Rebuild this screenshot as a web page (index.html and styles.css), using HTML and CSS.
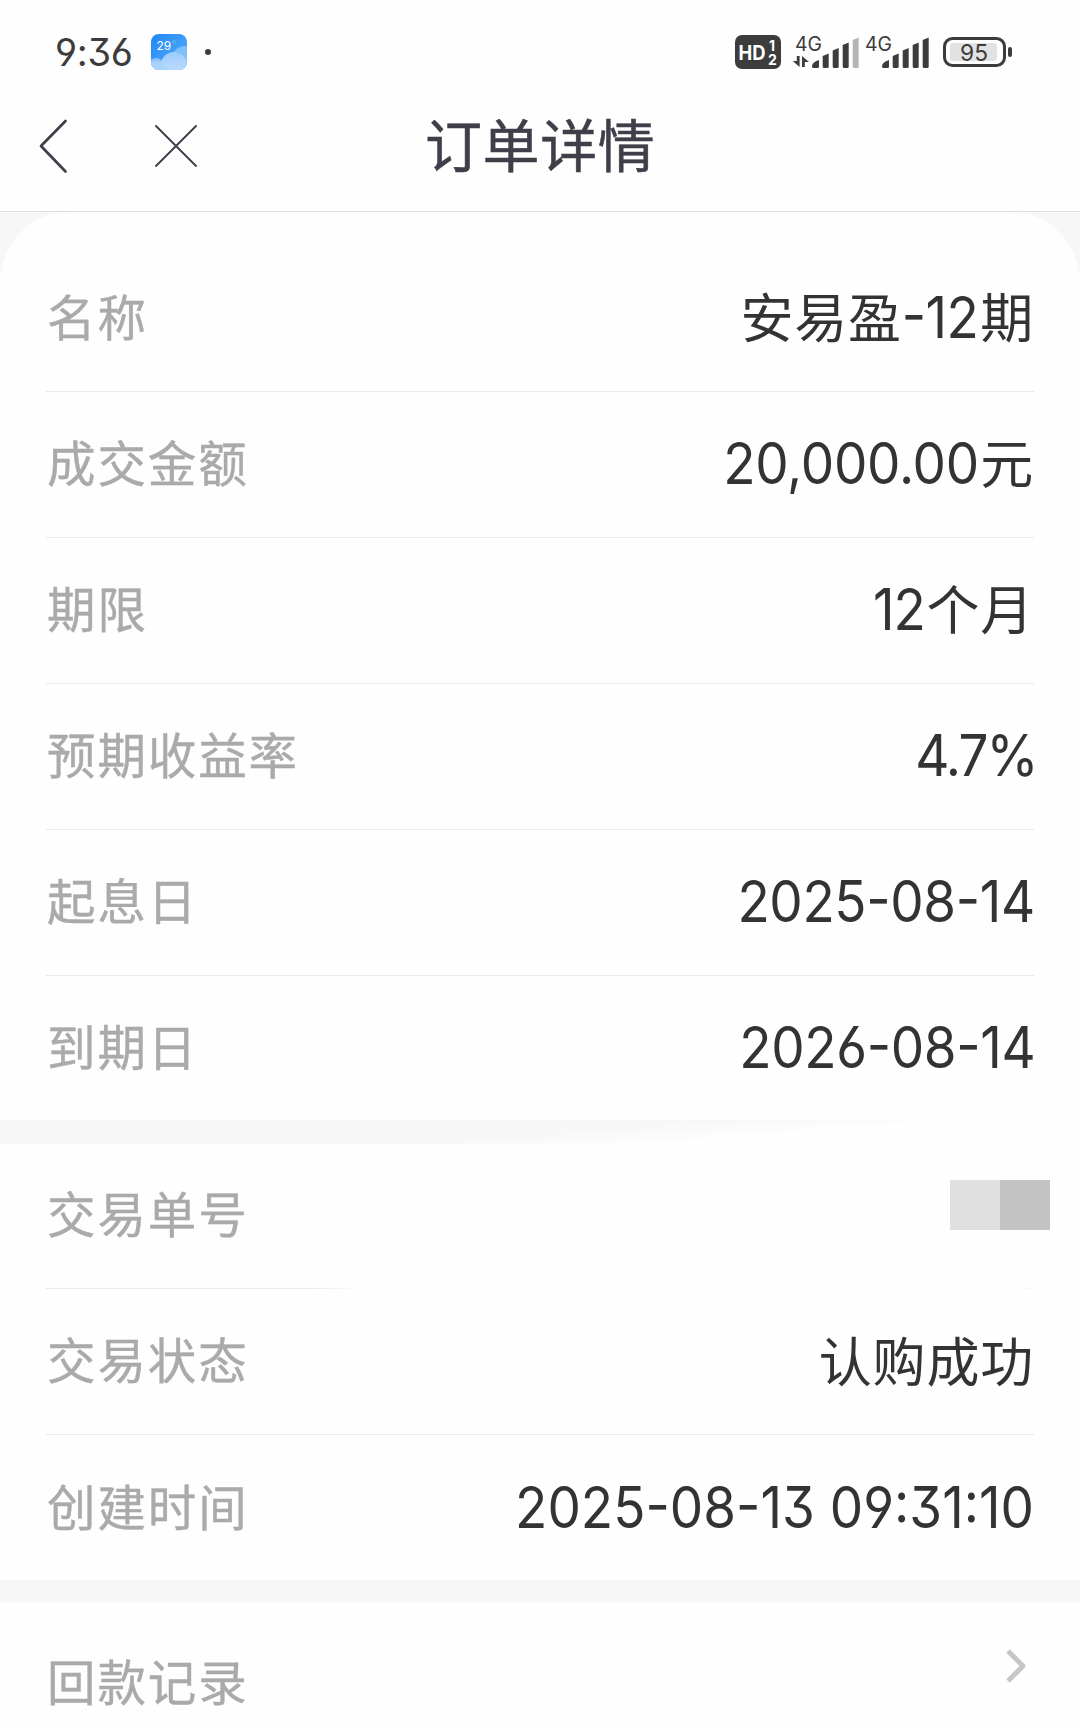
FILE: index.html
```
<!DOCTYPE html>
<html lang="zh-CN">
<head>
<meta charset="utf-8">
<title>订单详情</title>
<link rel="stylesheet" href="styles.css">
</head>
<body>
<div class="status">
  <span class="clock">9:36</span>
  <svg class="weather" width="36" height="36" viewBox="0 0 36 36">
    <defs>
      <linearGradient id="sky" x1="0" y1="0" x2="1" y2="1"><stop offset="0" stop-color="#1f86f5"/><stop offset="1" stop-color="#5cb2fb"/></linearGradient>
      <linearGradient id="cloud" x1="0" y1="0" x2="0" y2="1"><stop offset="0" stop-color="#9dcbfc"/><stop offset="1" stop-color="#c6e0fd"/></linearGradient>
      <clipPath id="tile"><rect width="36" height="36" rx="8"/></clipPath>
    </defs>
    <g clip-path="url(#tile)">
      <rect width="36" height="36" fill="url(#sky)"/>
      <circle cx="34" cy="25" r="13" fill="#7fbffb"/>
      <circle cx="5" cy="32" r="8" fill="#8cc5fc"/>
      <circle cx="23" cy="31" r="13" fill="url(#cloud)"/>
      <path d="M0 29q6-5 11 1q4 5 12 6H0z" fill="#a9d2fd"/>
    </g>
    <text x="5.500" y="16" class="temp">29</text>
    <circle cx="23" cy="8" r="1.400" fill="none" stroke="#6ac0ee" stroke-width=".8"/>
  </svg>
  <span class="dot"></span>
  <svg class="hd" width="46" height="34" viewBox="0 0 46 34">
    <rect width="46" height="34" rx="7" fill="#3c3c3c"/>
    <text x="3.500" y="25" class="hd-text" textLength="27" lengthAdjust="spacingAndGlyphs">HD</text>
    <text x="34" y="15.500" class="hd-num">1</text>
    <text x="33" y="30" class="hd-num">2</text>
  </svg>
  <svg class="signal" width="138" height="44" viewBox="0 -4 138 44">
    <defs>
      <g id="bars">
        <path d="M19 32.500q0-4.500 7-6.500v6.500q0 1.500-1.500 1.500h-4q-1.500 0-1.500-1.500zM29.700 22l6-2.500v13q0 1.500-1.500 1.500h-3q-1.500 0-1.500-1.500zM39.700 16.500l6-2.500v18.500q0 1.500-1.500 1.500h-3q-1.500 0-1.500-1.500zM49.700 11l6-2.500v24q0 1.500-1.500 1.500h-3q-1.500 0-1.500-1.500z"/>
      </g>
    </defs>
    <g fill="#3c3c3c">
      <text x="2" y="16.500" class="net" textLength="27" lengthAdjust="spacingAndGlyphs">4G</text>
      <path d="M3.800 22h2.800v11L-.3 27h4.100zM9 22l7 6h-4.200v5H9z"/>
      <use href="#bars"/>
      <path d="M59.700 6l6-2.500v29q0 1.500-1.500 1.500h-3q-1.500 0-1.500-1.500z" fill="#b5b5b5"/>
      <text x="72" y="16.500" class="net" textLength="27" lengthAdjust="spacingAndGlyphs">4G</text>
      <use href="#bars" x="70"/>
      <path d="M129.700 6l6-2.500v29q0 1.500-1.500 1.500h-3q-1.500 0-1.500-1.500z"/>
    </g>
  </svg>
  <svg class="battery" width="70" height="30" viewBox="0 0 70 30">
    <rect x="1.500" y="1.500" width="60" height="27" rx="8" fill="#fefefe" stroke="#3c3c3c" stroke-width="3"/>
    <rect x="7" y="6" width="47" height="18" rx="3" fill="#e2e2e2"/>
    <rect x="65" y="10" width="4" height="10" rx="2" fill="#3c3c3c"/>
    <text x="17" y="23.500" class="level" textLength="28" lengthAdjust="spacingAndGlyphs">95</text>
  </svg>
</div>

<header class="nav">
  <svg class="back" width="30" height="56" viewBox="0 0 30 56"><path d="M26.500 3L2 28l24.500 25.500" fill="none" stroke="#3f3f4a" stroke-width="2.700" stroke-linecap="round" stroke-linejoin="round"/></svg>
  <svg class="close" width="44" height="44" viewBox="0 0 44 44"><path d="M2 2l40 40M42 2L2 42" fill="none" stroke="#3f3f4a" stroke-width="1.900" stroke-linecap="round"/></svg>
  <h1 class="title">订单详情</h1>
</header>

<main class="page">
  <section class="card first">
    <div class="row"><span class="label">名称</span><span class="value mixed">安易盈<span class="num n12">-12</span>期</span></div>
    <div class="row"><span class="label">成交金额</span><span class="value mixed"><span class="num amount">20,000.00</span>元</span></div>
    <div class="row"><span class="label">期限</span><span class="value mixed"><span class="num term">12</span>个月</span></div>
    <div class="row"><span class="label">预期收益率</span><span class="value num rate">4.7%</span></div>
    <div class="row"><span class="label">起息日</span><span class="value num date">2025-08-14</span></div>
    <div class="row end"><span class="label">到期日</span><span class="value num date">2026-08-14</span></div>
  </section>
  <div class="gap fading"></div>
  <section class="card">
    <div class="row faded"><span class="label">交易单号</span><span class="mask"><i class="light"></i><i class="dark"></i></span></div>
    <div class="row"><span class="label">交易状态</span><span class="value mixed">认购成功</span></div>
    <div class="row end"><span class="label">创建时间</span><span class="value num stamp">2025-08-13 09:31:10</span></div>
  </section>
  <div class="gap short"></div>
  <section class="card">
    <div class="row link"><span class="label">回款记录</span>
      <svg class="chevron" width="22" height="36" viewBox="0 0 22 36"><path d="M3 3l15 15L3 33" fill="none" stroke="#c6c6c6" stroke-width="5" stroke-linejoin="round"/></svg>
    </div>
  </section>
</main>
</body>
</html>
```
FILE: styles.css
```
* { box-sizing: border-box; }
body {
  margin: 0;
  width: 1080px;
  height: 1730px;
  overflow: hidden;
  background: #fefefe;
  font-family: "Noto Sans CJK SC", sans-serif;
}
svg { display: block; flex: none; }
svg text { font-family: Inter, sans-serif; }

.status {
  display: flex;
  align-items: center;
  height: 104px;
  padding: 0 67px 0 55px;
  color: #3c3c3c;
}
.clock {
  width: 96px;
  font: 400 38px/40px Inter, sans-serif;
  font-feature-settings: "cv03", "cv04", "cv09";
  letter-spacing: -.3px;
  white-space: nowrap;
}
.temp { font-size: 12px; fill: #fff; }
.dot { width: 6px; height: 6px; margin-left: 18px; border-radius: 50%; background: #3c3c3c; }
.hd { margin-left: auto; }
.hd-text { font-size: 20px; font-weight: 700; fill: #fff; }
.hd-num { font-size: 14px; font-weight: 700; fill: #fff; }
.signal { margin-left: 12px; }
.net { font-size: 20px; }
.battery { margin-left: 12px; }
.level { font-size: 23px; fill: #3c3c3c; }

.nav {
  display: grid;
  grid-template-columns: 115px 312px 1fr;
  align-items: center;
  height: 108px;
  padding: 0 0 24px 39px;
  border-bottom: 1px solid #dedede;
}
.title {
  margin: -8px 0 0 -41px;
  color: #3f3f4a;
  font-size: 57px;
  font-weight: 400;
  line-height: 80px;
  letter-spacing: .6px;
  -webkit-text-stroke: .5px #3f3f4a;
}

.page { background: #f7f7f7; }
.card { padding: 0 46px; background: #fefefe; }
.first { padding-top: 34px; border-radius: 70px 70px 0 0; }
.row {
  display: flex;
  justify-content: space-between;
  align-items: center;
  height: 146px;
  padding-bottom: 3px;
  border-bottom: 1px solid #e9e9e9;
}
.end { height: 144px; padding-bottom: 2px; border-bottom: 0; }
.label {
  margin: -4px 0 0 1px;
  color: #aaa;
  font-size: 48.5px;
  line-height: 70px;
  letter-spacing: 1.9px;
  -webkit-text-stroke: .4px #aaa;
}
.value { color: #333; font-size: 53px; line-height: 76px; white-space: nowrap; }
.mixed { margin-top: -2px; letter-spacing: .8px; }
.num {
  display: inline-block;
  font-family: Inter, sans-serif;
  font-size: 57px;
  font-feature-settings: "cv03", "cv04", "cv09", "case";
  transform: scaleX(.93);
  transform-origin: right;
}
.value.num { margin-top: 2px; }
.n12 { margin: 0 2px 0 -6px; letter-spacing: -.6px; }
.amount { letter-spacing: -.3px; margin-right: 1px; }
.term { margin-right: 1px; letter-spacing: -1px; }
.rate { margin-right: -3px; letter-spacing: -2px; }
.date { letter-spacing: -.4px; margin-right: -1px; }

.gap { height: 24px; }
.short { height: 23px; }
.fading { background: linear-gradient(175.4deg, #f7f7f7 50%, #fefefe 71%); }
.faded {
  height: 145px;
  padding-bottom: 5px;
  border-bottom: 0;
  background: linear-gradient(90deg, #e9e9e9 260px, #fefefe 320px, #fefefe 965px, #f8f8f8 985px) bottom / 100% 1px no-repeat;
}
.faded + .row + .end { height: 145px; }
.mask { display: flex; margin: -18px -16px 0 0; }
.mask i { width: 50px; height: 50px; }
.light { background: #e0e0e0; }
.dark { background: #c3c3c3; }
.link { height: 160px; padding-bottom: 0; border-bottom: 0; }
.link .label { margin-top: -6px; }
.chevron { margin: -34px 7px 0 0; }
```
